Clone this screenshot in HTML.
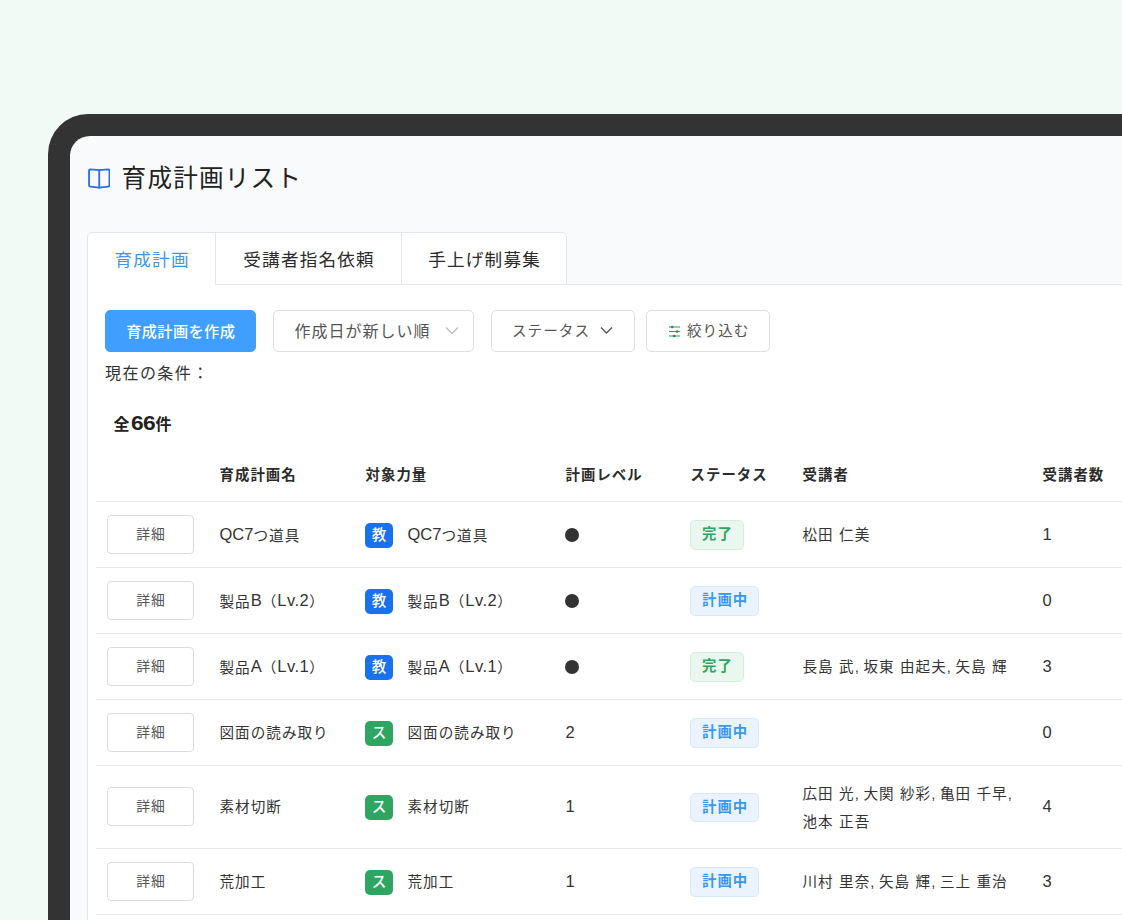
<!DOCTYPE html>
<html lang="ja">
<head>
<meta charset="utf-8">
<title>育成計画リスト</title>
<style>
*{box-sizing:border-box;margin:0;padding:0}
html,body{width:1122px;height:920px;overflow:hidden;background:#f2faf6}
body{font-family:"Liberation Sans","Noto Sans CJK JP",sans-serif;color:#333;position:relative}
.frame{position:absolute;left:48px;top:114px;width:1200px;height:1000px;background:#333;border-radius:40px 0 0 0}
.screen{position:absolute;left:70px;top:136px;width:1200px;height:1000px;background:#f9fafb;border-radius:20px 0 0 0;overflow:hidden}
.abs{position:absolute;white-space:nowrap}
.title{left:121.6px;top:160.5px;font-size:24.6px;letter-spacing:1.2px;line-height:36px;color:#222}
.icon-book{left:87.5px;top:167.5px;width:22.5px;height:21px}
.panel{position:absolute;left:87px;top:284px;width:1100px;height:700px;background:#fff;border-left:1px solid #e3e6ea;border-top:1px solid #e3e6ea}
.tabs{position:absolute;left:87px;top:232px;height:53px;width:480px;display:flex;border:1px solid #e3e6ea;border-radius:5px 5px 0 0;background:#fff;overflow:hidden}
.tab{height:52px;line-height:55px;font-size:17.6px;letter-spacing:1.2px;text-indent:1.2px;text-align:center;color:#2b2b2b;border-right:1px solid #e3e6ea}
.tab.on{color:#3b97ee;width:128px}
.tab.t2{width:186px}
.tab.t3{width:164px;border-right:0}
.tabmask{position:absolute;left:88px;top:283px;width:127px;height:3px;background:#fff}
.btn{position:absolute;top:310px;height:42px;border:1px solid #dcdfe3;border-radius:5px;background:#fff;font-size:14.6px;letter-spacing:1px;line-height:41.4px;color:#555;white-space:nowrap}
.btn.primary{left:105px;width:151px;text-indent:0.4px;font-size:15.2px;letter-spacing:0.4px;background:#409eff;border-color:#409eff;color:#fff;text-align:center;font-weight:500}
.cond{left:105px;top:362px;font-size:16px;letter-spacing:1.45px;line-height:24px;color:#333}
.count{left:113.5px;top:412px;font-size:16px;letter-spacing:1px;line-height:26px;font-weight:700;color:#222}
.count .n{display:inline-block;font-size:20.5px;letter-spacing:-0.6px;margin-left:0.1px;margin-right:3.2px;line-height:20px;transform:scaleX(1.11);transform-origin:left center}
.th{font-size:14.4px;letter-spacing:1px;font-weight:700;line-height:22px;color:#2b2b2b;top:464px;margin-left:0.6px}
.row{position:absolute;left:96px;width:1100px;border-top:1px solid #e8eaed}
.cell{position:absolute;white-space:nowrap;font-size:14.6px;letter-spacing:1px;line-height:24px;color:#333;word-spacing:0.35px;margin-left:0.5px}
.c{letter-spacing:-0.75px}
.l{font-size:16.5px;position:relative;top:-0.8px;letter-spacing:0}
.l.v{letter-spacing:0.5px}
.detail{position:absolute;left:11px;width:87px;height:39px;border:1px solid #d9dce0;border-radius:4px;background:#fff;text-align:center;font-size:13.8px;letter-spacing:0.8px;text-indent:0.8px;line-height:38px;color:#555}
.badge{position:absolute;left:269px;width:28px;height:25px;border-radius:5px;color:#fff;font-size:14.6px;line-height:25px;text-align:center;font-weight:500}
.b-blue{background:#1871ee}
.b-green{background:#2fa562}
.dot{position:absolute;left:469px;width:14px;height:14px;border-radius:50%;background:#333}
.st{position:absolute;left:594px;height:29.5px;border-radius:5px;font-size:14.4px;letter-spacing:1px;font-weight:700;line-height:27.5px;padding:0 10px 0 11px;border:1px solid}
.st.done{color:#2fa562;background:#eaf7ef;border-color:#d4eedd}
.st.plan{color:#3b97ee;background:#ebf4fe;border-color:#d6e9fc}
</style>
</head>
<body>
<div class="frame"></div>
<div class="screen"></div>

<svg class="abs icon-book" viewBox="0 0 22 20" fill="none" stroke="#2a6fe8" stroke-width="1.8" stroke-linejoin="round" stroke-linecap="round">
<path d="M1 2.2 Q1 1 2.2 1 L11 1.8 L19.8 1 Q21 1 21 2.2 L21 16.6 Q21 17.8 19.8 17.9 L11 19 L2.2 17.9 Q1 17.8 1 16.6 Z"/>
<path d="M11 1.8 L11 19"/>
</svg>
<div class="abs title">育成計画リスト</div>

<div class="panel"></div>
<div class="tabs">
  <div class="tab on">育成計画</div>
  <div class="tab t2">受講者指名依頼</div>
  <div class="tab t3">手上げ制募集</div>
</div>
<div class="tabmask"></div>

<div class="btn primary">育成計画を作成</div>
<div class="btn" style="left:273px;width:201px;padding-left:20.5px;font-size:16px">作成日が新しい順<svg style="position:absolute;left:171px;top:15px" width="14" height="9" viewBox="0 0 14 9" fill="none" stroke="#b8bcc4" stroke-width="1.3"><path d="M1 1.5 L7 7.5 L13 1.5"/></svg></div>
<div class="btn" style="left:491px;width:144px;padding-left:20px">ステータス<svg style="position:absolute;left:108px;top:15px" width="13" height="9" viewBox="0 0 13 9" fill="none" stroke="#555" stroke-width="1.3"><path d="M1 1.5 L6.5 7 L12 1.5"/></svg></div>
<div class="btn" style="left:646px;width:124px;padding-left:40px">絞り込む<svg style="position:absolute;left:21.7px;top:13.6px" width="11.5" height="13" viewBox="0 0 11.5 13" fill="none" stroke="#2a9d5c" stroke-width="1.1"><path d="M0 2 H11.5 M0 6.5 H11.5 M0 11 H11.5"/><circle cx="3.2" cy="2" r="1.35" fill="#1f9152" stroke="none"/><circle cx="8.1" cy="6.5" r="1.35" fill="#1f9152" stroke="none"/><circle cx="5.2" cy="11" r="1.35" fill="#1f9152" stroke="none"/></svg></div>

<div class="abs cond">現在の条件：</div>
<div class="abs count">全<span class="n">66</span>件</div>

<div class="abs th" style="left:219px">育成計画名</div>
<div class="abs th" style="left:365px">対象力量</div>
<div class="abs th" style="left:565px">計画レベル</div>
<div class="abs th" style="left:690px">ステータス</div>
<div class="abs th" style="left:802px">受講者</div>
<div class="abs th" style="left:1042px">受講者数</div>

<div class="row" style="top:501px;height:66px">
  <div class="detail" style="top:13px">詳細</div>
  <div class="cell" style="left:123px;top:21px"><span class="l">QC7</span>つ道具</div>
  <div class="badge b-blue" style="top:20.5px">教</div>
  <div class="cell" style="left:311px;top:21px"><span class="l">QC7</span>つ道具</div>
  <div class="dot" style="top:25.5px"></div>
  <div class="st done" style="top:18px">完了</div>
  <div class="cell" style="left:706px;top:21px">松田 仁美</div>
  <div class="cell" style="left:946px;top:21px"><span class="l">1</span></div>
</div>
<div class="row" style="top:567px;height:66px">
  <div class="detail" style="top:13px">詳細</div>
  <div class="cell" style="left:123px;top:21px">製品<span class="l">B</span>（<span class="l v">Lv.2</span>）</div>
  <div class="badge b-blue" style="top:20.5px">教</div>
  <div class="cell" style="left:311px;top:21px">製品<span class="l">B</span>（<span class="l v">Lv.2</span>）</div>
  <div class="dot" style="top:25.5px"></div>
  <div class="st plan" style="top:18px">計画中</div>
  <div class="cell" style="left:946px;top:21px"><span class="l">0</span></div>
</div>
<div class="row" style="top:633px;height:66px">
  <div class="detail" style="top:13px">詳細</div>
  <div class="cell" style="left:123px;top:21px">製品<span class="l">A</span>（<span class="l v">Lv.1</span>）</div>
  <div class="badge b-blue" style="top:20.5px">教</div>
  <div class="cell" style="left:311px;top:21px">製品<span class="l">A</span>（<span class="l v">Lv.1</span>）</div>
  <div class="dot" style="top:25.5px"></div>
  <div class="st done" style="top:18px">完了</div>
  <div class="cell" style="left:706px;top:21px">長島 武<span class="c">,</span> 坂東 由起夫<span class="c">,</span> 矢島 輝</div>
  <div class="cell" style="left:946px;top:21px"><span class="l">3</span></div>
</div>
<div class="row" style="top:699px;height:66px">
  <div class="detail" style="top:13px">詳細</div>
  <div class="cell" style="left:123px;top:21px">図面の読み取り</div>
  <div class="badge b-green" style="top:20.5px">ス</div>
  <div class="cell" style="left:311px;top:21px">図面の読み取り</div>
  <div class="cell" style="left:469px;top:21px"><span class="l">2</span></div>
  <div class="st plan" style="top:18px">計画中</div>
  <div class="cell" style="left:946px;top:21px"><span class="l">0</span></div>
</div>
<div class="row" style="top:765px;height:83px">
  <div class="detail" style="top:21px">詳細</div>
  <div class="cell" style="left:123px;top:29px">素材切断</div>
  <div class="badge b-green" style="top:28.5px">ス</div>
  <div class="cell" style="left:311px;top:29px">素材切断</div>
  <div class="cell" style="left:469px;top:29px"><span class="l">1</span></div>
  <div class="st plan" style="top:26.5px">計画中</div>
  <div class="cell" style="left:706px;top:14px;line-height:28px">広田 光<span class="c">,</span> 大関 紗彩<span class="c">,</span> 亀田 千早<span class="c">,</span><br>池本 正吾</div>
  <div class="cell" style="left:946px;top:29px"><span class="l">4</span></div>
</div>
<div class="row" style="top:848px;height:66px">
  <div class="detail" style="top:13px">詳細</div>
  <div class="cell" style="left:123px;top:21px">荒加工</div>
  <div class="badge b-green" style="top:20.5px">ス</div>
  <div class="cell" style="left:311px;top:21px">荒加工</div>
  <div class="cell" style="left:469px;top:21px"><span class="l">1</span></div>
  <div class="st plan" style="top:18px">計画中</div>
  <div class="cell" style="left:706px;top:21px">川村 里奈<span class="c">,</span> 矢島 輝<span class="c">,</span> 三上 重治</div>
  <div class="cell" style="left:946px;top:21px"><span class="l">3</span></div>
</div>
<div class="row" style="top:914px;height:66px"></div>
</body>
</html>
